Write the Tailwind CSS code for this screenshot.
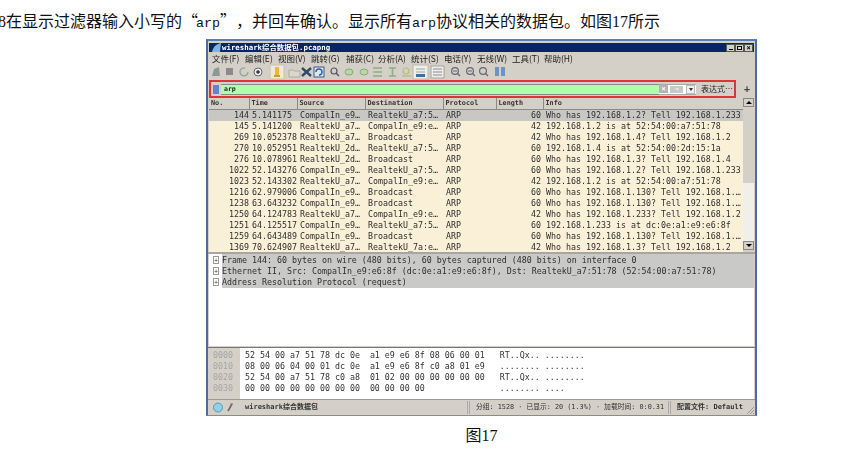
<!DOCTYPE html>
<html lang="zh-CN">
<head>
    <meta charset="UTF-8">
    <title>图17</title>
    <script src="https://cdn.jsdelivr.net/npm/@tailwindcss/browser@4"></script>
</head>
<body class="bg-white w-[859px] h-[453px] overflow-hidden font-['Liberation_Serif','Noto_Sans_CJK_SC',serif] text-[#111]">
    <p class="h-[39px] pt-[9px] -ml-[2px] text-[16px] leading-[22px] whitespace-nowrap [text-spacing-trim:space-all] font-['Noto_Sans_CJK_SC',sans-serif]"><span class="font-['Liberation_Serif']">8</span>在显示过滤器输入小写的“<span class="-ml-[2px] font-['Liberation_Mono'] text-[13.3px]">arp</span>”，并回车确认。显示所有<span class="font-['Liberation_Mono'] text-[13.3px]">arp</span>协议相关的数据包。如图<span class="font-['Liberation_Serif']">17</span>所示</p>

    <div class="ml-[206px] w-[551px]">
        <!-- window -->
        <div class="h-[377px] border-t-2 border-x-2 border-b border-t-[#5a7fae] border-x-[#4b6c9c] border-b-[#8a8a86] bg-[#d4d0c8] flex flex-col blur-[0.3px] font-['DejaVu_Sans_Mono','Noto_Sans_CJK_SC',monospace]">
            <div class="h-[2px] shrink-0"></div>
            <!-- title -->
            <div class="h-[9px] mx-[1px] shrink-0 bg-[#0a2468] flex items-center pl-[2px] pr-[1px] text-white">
                <svg class="w-[10px] h-[9px]" viewBox="0 0 10 9"><path d="M1 9 C2 4 5 1 10 0 L9 9 Z" fill="#7fb0ea"/></svg>
                <span class="ml-[1px] text-[7.4px] leading-[9px] font-bold">wireshark综合数据包.pcapng</span>
                <div class="ml-auto flex gap-0">
                    <span class="w-[9px] h-[8px] bg-[#d4d0c8] border border-[#555] flex items-end justify-center"><i class="block w-[4px] h-[1px] bg-black mb-[0.5px]"></i></span>
                    <span class="w-[9px] h-[8px] bg-[#d4d0c8] border border-[#555] flex items-center justify-center"><i class="block w-[5px] h-[4px] border border-black"></i></span>
                    <span class="w-[9px] h-[8px] bg-[#d4d0c8] border border-[#555] text-black text-[7px] leading-[6px] text-center font-bold">×</span>
                </div>
            </div>
            <!-- menu -->
            <div class="h-[12px] shrink-0 flex items-center pl-[4px] text-[8.5px] leading-[12px] text-[#222] whitespace-nowrap font-['Noto_Sans_CJK_SC',sans-serif]">
                <span class="w-[33px]">文件(F)</span><span class="w-[33px]">编辑(E)</span><span class="w-[33px]">视图(V)</span><span class="w-[35px]">跳转(G)</span><span class="w-[32px]">捕获(C)</span><span class="w-[33px]">分析(A)</span><span class="w-[33px]">统计(S)</span><span class="w-[33px]">电话(Y)</span><span class="w-[35px]">无线(W)</span><span class="w-[32px]">工具(T)</span><span>帮助(H)</span>
            </div>
            <!-- toolbar -->
            <div class="h-[16px] shrink-0 flex items-center">
                <svg class="w-[304px] h-[16px]" viewBox="0 0 304 16">
                    <path d="M4 12 L6 5 L11 3 L12 12 Z" fill="#8c9a96"/>
                    <rect x="18" y="4" width="7" height="7" fill="#8b8b8b"/>
                    <path d="M37 4 a4 4 0 1 0 3 4" fill="none" stroke="#9aa49e" stroke-width="1.4"/>
                    <circle cx="50" cy="8" r="4" fill="#eee" stroke="#666"/><circle cx="50" cy="8" r="1.8" fill="#333"/>
                    <rect x="62" y="1" width="14" height="14" fill="#efe9d8" stroke="#c6c0b0"/>
                    <path d="M67 3 h4 v9 h-4 z" fill="#e8b93a"/><path d="M66 11 h6 v2 h-6 z" fill="#d69a20"/>
                    <path d="M81 6 h4 l1 1 h6 v6 h-11 z" fill="#dcd8c8" stroke="#aaa"/>
                    <path d="M94 4 L103 12 M103 4 L94 12" stroke="#334a66" stroke-width="2.4"/>
                    <rect x="106" y="3" width="10" height="10" fill="#dde6ee" stroke="#3c5a86"/><path d="M108 8 a3 3 0 1 1 3 3" fill="none" stroke="#2a5fa8" stroke-width="1.4"/>
                    <circle cx="126" cy="7" r="3" fill="none" stroke="#556" stroke-width="1.2"/><path d="M128 9 L131 12" stroke="#556" stroke-width="1.5"/>
                    <ellipse cx="141" cy="8" rx="4" ry="3" fill="#b9d8a6" stroke="#8aa87a"/>
                    <ellipse cx="156" cy="8" rx="4" ry="3" fill="#b9d8a6" stroke="#8aa87a"/>
                    <path d="M165 4 h9 M165 8 h9 M165 12 h9" stroke="#8fae86" stroke-width="1.6"/>
                    <path d="M181 4 h7 M184.5 4 v8 M181 12 h7" stroke="#8fae86" stroke-width="1.6"/>
                    <path d="M194 12 h9" stroke="#b6c07c" stroke-width="1.5"/><circle cx="198" cy="7" r="3" fill="none" stroke="#b6c07c" stroke-width="1.2"/>
                    <rect x="205" y="1" width="15" height="14" fill="#efeee8" stroke="#bcb8ac"/>
                    <path d="M208 5 h9 M208 8 h9" stroke="#9aa" stroke-width="1"/><rect x="208" y="10" width="9" height="3" fill="#3b6ea8"/>
                    <rect x="223" y="2" width="13" height="12" fill="#efeee8" stroke="#a8a49a"/>
                    <path d="M225 5 h9 M225 8 h9 M225 11 h9" stroke="#8a8aa0" stroke-width="1"/>
                    <g fill="none" stroke="#667" stroke-width="1.2"><circle cx="247" cy="7" r="3.4"/><path d="M249.5 9.5 L252 12"/><circle cx="262" cy="7" r="3.4"/><path d="M264.5 9.5 L267 12"/><circle cx="275" cy="7" r="3.4"/><path d="M277.5 9.5 L280 12"/></g>
                    <path d="M245 7 h4 M260 7 h4" stroke="#667"/>
                    <rect x="287" y="3" width="4" height="9" fill="#6d93c4"/><rect x="293" y="3" width="4" height="9" fill="#6d93c4"/>
                </svg>
            </div>
            <!-- filter bar -->
            <div class="h-[18px] shrink-0 flex items-center">
                <div class="ml-[1px] w-[527px] h-[18px] border-2 border-[#d8363a] flex items-center pl-[2px] pr-[2px]">
                    <span class="w-[6px] h-[9px] bg-[#5f86c8] shrink-0"></span>
                    <div class="ml-[2px] h-[11px] w-[438px] bg-[#afffaf] border-y border-[#8a8a86] text-[6.5px] font-bold leading-[9px] pl-[3px] text-[#222] flex items-center shrink-0">arp</div>
                    <div class="h-[11px] grow bg-white flex items-center border-y border-[#a8a8a4]">
                        <span class="w-[9px] h-[8px] bg-[#b4b4b4] text-white text-[7px] leading-[8px] text-center font-bold">×</span>
                        <span class="ml-[2px] w-[13px] h-[7px] bg-[#c8c8c8] text-white text-[7px] leading-[6px] text-center">→</span>
                        <span class="ml-auto mr-[1px] w-[9px] h-[9px] border border-[#bbb] bg-[#eee] flex items-center justify-center"><i class="block border-x-[2px] border-t-[3px] border-x-transparent border-t-[#333]"></i></span>
                    </div>
                    <span class="w-[36px] pl-[5px] shrink-0 text-[8px] leading-[12px] text-[#222] font-['Noto_Sans_CJK_SC',sans-serif] whitespace-nowrap">表达式…</span>
                </div>
                <span class="ml-[8px] text-[10px] leading-[12px] font-bold text-[#444]">+</span>
            </div>
            <!-- packet list -->
            <div class="h-[154px] shrink-0 flex pl-[1px] pr-[1px]">
                <div class="w-[534px] h-[154px] overflow-hidden bg-[#faf0d8]">
                    <table class="table-fixed w-[534px] border-collapse text-[8.3px] leading-[11px] text-[#2e2e2e] whitespace-nowrap">
                        <colgroup><col class="w-[40px]"><col class="w-[48px]"><col class="w-[68px]"><col class="w-[78px]"><col class="w-[53px]"><col class="w-[47px]"><col class="w-[200px]"></colgroup>
                        <thead class="text-[6.8px] font-bold text-left text-[#333]">
                            <tr class="h-[11px] bg-[#d4d0c8]">
                                <th class="font-bold pl-[2px] border-r border-[#8a8a86] border-b">No.</th><th class="font-bold pl-[2px] border-r border-[#8a8a86] border-b">Time</th><th class="font-bold pl-[2px] border-r border-[#8a8a86] border-b">Source</th><th class="font-bold pl-[2px] border-r border-[#8a8a86] border-b">Destination</th><th class="font-bold pl-[2px] border-r border-[#8a8a86] border-b">Protocol</th><th class="font-bold pl-[2px] border-r border-[#8a8a86] border-b">Length</th><th class="font-bold pl-[2px] border-b border-[#8a8a86]">Info</th>
                            </tr>
                        </thead>
                        <tbody class="[&_td]:h-[11px] [&_td]:p-0 [&_td]:overflow-hidden [&_td:nth-child(1)]:text-right [&_td:nth-child(6)]:text-right [&_td:nth-child(6)]:pr-[2px] [&_td:nth-child(2)]:pl-[3px] [&_td:nth-child(3)]:pl-[3px] [&_td:nth-child(4)]:pl-[3px] [&_td:nth-child(5)]:pl-[3px] [&_td:nth-child(7)]:pl-[3px]">
                            <tr class="bg-[#c9c7c3]"><td>144</td><td>5.141175</td><td>CompalIn_e9…</td><td>RealtekU_a7:5…</td><td>ARP</td><td>60</td><td>Who has 192.168.1.2? Tell 192.168.1.233</td></tr>
                            <tr><td>145</td><td>5.141200</td><td>RealtekU_a7…</td><td>CompalIn_e9:e…</td><td>ARP</td><td>42</td><td>192.168.1.2 is at 52:54:00:a7:51:78</td></tr>
                            <tr><td>269</td><td>10.052378</td><td>RealtekU_a7…</td><td>Broadcast</td><td>ARP</td><td>42</td><td>Who has 192.168.1.4? Tell 192.168.1.2</td></tr>
                            <tr><td>270</td><td>10.052951</td><td>RealtekU_2d…</td><td>RealtekU_a7:5…</td><td>ARP</td><td>60</td><td>192.168.1.4 is at 52:54:00:2d:15:1a</td></tr>
                            <tr><td>276</td><td>10.078961</td><td>RealtekU_2d…</td><td>Broadcast</td><td>ARP</td><td>60</td><td>Who has 192.168.1.3? Tell 192.168.1.4</td></tr>
                            <tr><td>1022</td><td>52.143276</td><td>CompalIn_e9…</td><td>RealtekU_a7:5…</td><td>ARP</td><td>60</td><td>Who has 192.168.1.2? Tell 192.168.1.233</td></tr>
                            <tr><td>1023</td><td>52.143302</td><td>RealtekU_a7…</td><td>CompalIn_e9:e…</td><td>ARP</td><td>42</td><td>192.168.1.2 is at 52:54:00:a7:51:78</td></tr>
                            <tr><td>1216</td><td>62.979006</td><td>CompalIn_e9…</td><td>Broadcast</td><td>ARP</td><td>60</td><td>Who has 192.168.1.130? Tell 192.168.1.…</td></tr>
                            <tr><td>1238</td><td>63.643232</td><td>CompalIn_e9…</td><td>Broadcast</td><td>ARP</td><td>60</td><td>Who has 192.168.1.130? Tell 192.168.1.…</td></tr>
                            <tr><td>1250</td><td>64.124783</td><td>RealtekU_a7…</td><td>CompalIn_e9:e…</td><td>ARP</td><td>42</td><td>Who has 192.168.1.233? Tell 192.168.1.2</td></tr>
                            <tr><td>1251</td><td>64.125517</td><td>CompalIn_e9…</td><td>RealtekU_a7:5…</td><td>ARP</td><td>60</td><td>192.168.1.233 is at dc:0e:a1:e9:e6:8f</td></tr>
                            <tr><td>1259</td><td>64.643489</td><td>CompalIn_e9…</td><td>Broadcast</td><td>ARP</td><td>60</td><td>Who has 192.168.1.130? Tell 192.168.1.…</td></tr>
                            <tr><td>1369</td><td>70.624907</td><td>RealtekU_a7…</td><td>RealtekU_7a:e…</td><td>ARP</td><td>42</td><td>Who has 192.168.1.3? Tell 192.168.1.2</td></tr>
                        </tbody>
                    </table>
                </div>
                <!-- scrollbar -->
                <div class="w-[11px] h-[152px] bg-[#f1efe9] flex flex-col">
                    <span class="h-[9px] bg-[#d4d0c8] border border-[#888] flex items-center justify-center"><i class="block border-x-[3px] border-b-[3px] border-x-transparent border-b-black"></i></span>
                    <span class="h-[76px] bg-[#d4d0c8]"></span>
                    <span class="grow"></span>
                    <span class="h-[9px] bg-[#d4d0c8] border border-[#888] flex items-center justify-center"><i class="block border-x-[3px] border-t-[3px] border-x-transparent border-t-black"></i></span>
                </div>
            </div>
            <div class="h-[2px] shrink-0 bg-[#a8a6a0]"></div>
            <!-- details -->
            <div class="h-[92px] shrink-0 mx-[1px] bg-white">
                <div class="flex text-[8.3px] leading-[11px] text-[#2e2e2e]">
                    <div class="w-[13px] pt-[2px] pl-[4px] flex flex-col gap-[3px]">
                        <span class="w-[6px] h-[8px] border border-[#999] text-[6px] leading-[6px] text-center">+</span>
                        <span class="w-[6px] h-[8px] border border-[#999] text-[6px] leading-[6px] text-center">+</span>
                        <span class="w-[6px] h-[8px] border border-[#999] text-[6px] leading-[6px] text-center">+</span>
                    </div>
                    <div class="grow bg-[#c9c9c7] pt-[1px] h-[34px] whitespace-nowrap">
                        <p>Frame 144: 60 bytes on wire (480 bits), 60 bytes captured (480 bits) on interface 0</p>
                        <p>Ethernet II, Src: CompalIn_e9:e6:8f (dc:0e:a1:e9:e6:8f), Dst: RealtekU_a7:51:78 (52:54:00:a7:51:78)</p>
                        <p>Address Resolution Protocol (request)</p>
                    </div>
                </div>
            </div>
            <div class="h-[2px] shrink-0 bg-[#d4d0c8] border-b border-[#777]"></div>
            <!-- hex -->
            <div class="h-[51px] shrink-0 mx-[1px] bg-white flex text-[8.3px] leading-[11px] text-[#333] whitespace-pre">
                <div class="w-[31px] bg-[#d4d0c8] text-[#a5a5a2] pt-[2px] pl-[4px]">0000
0010
0020
0030</div>
                <div class="pl-[5px] pt-[2px]">52 54 00 a7 51 78 dc 0e  a1 e9 e6 8f 08 06 00 01   RT..Qx.. ........
08 00 06 04 00 01 dc 0e  a1 e9 e6 8f c0 a8 01 e9   ........ ........
52 54 00 a7 51 78 c0 a8  01 02 00 00 00 00 00 00   RT..Qx.. ........
00 00 00 00 00 00 00 00  00 00 00 00               ........ ....</div>
            </div>
            <!-- status bar -->
            <div class="grow flex items-center border-t border-[#999] text-[#333] text-[7px] whitespace-nowrap">
                <svg class="w-[26px] h-[13px] shrink-0" viewBox="0 0 26 13"><circle cx="10" cy="6.5" r="4.5" fill="#8fd0ea" stroke="#5a9ab0"/><path d="M20 10 L24 3" stroke="#667" stroke-width="1.6"/><path d="M22 3 h3" stroke="#c66" stroke-width="1"/></svg>
                <span class="ml-[11px] w-[222px] font-bold">wireshark综合数据包</span>
                <span class="h-[13px] w-[3px] border-x border-[#aaa]"></span>
                <span class="ml-[6px] w-[192px] text-[6.8px]">分组: 1528 · 已显示: 20 (1.3%) · 加载时间: 0:0.31</span>
                <span class="h-[13px] w-[3px] border-x border-[#aaa]"></span>
                <span class="ml-[6px] font-bold">配置文件: Default</span>
                <svg class="ml-auto w-[9px] h-[9px] self-end" viewBox="0 0 9 9"><path d="M8 1 L1 8 M8 4 L4 8 M8 7 L7 8" stroke="#999"/></svg>
            </div>
        </div>
        <p class="pt-[7px] text-center text-[16px] leading-[22px] font-['Noto_Sans_CJK_SC',sans-serif]">图<span class="font-['Liberation_Serif']">17</span></p>
    </div>
</body>
</html>
